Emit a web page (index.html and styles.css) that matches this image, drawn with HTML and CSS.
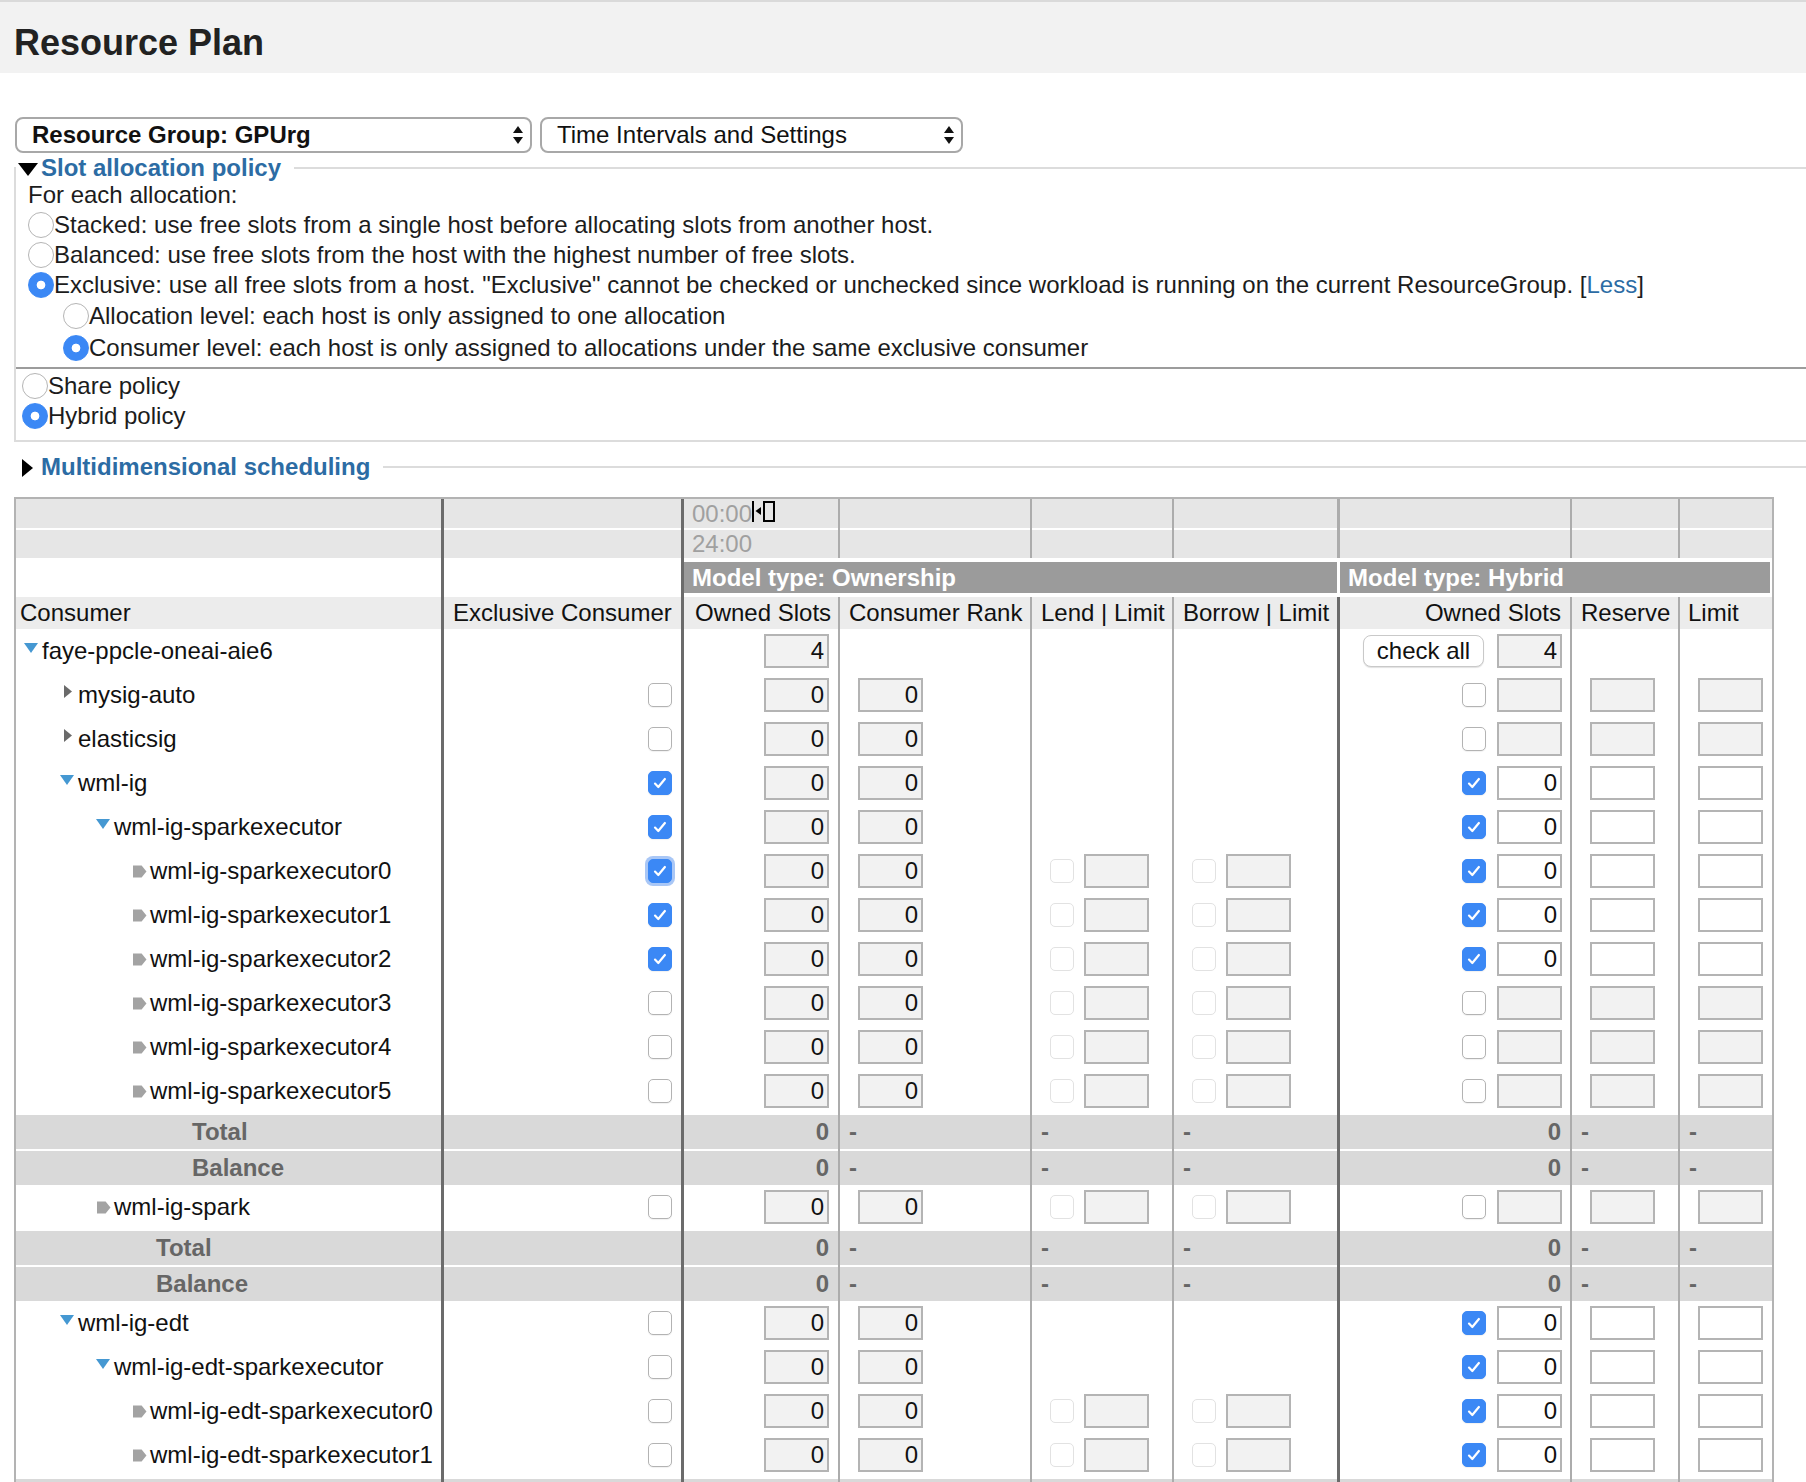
FILE: index.html
```html
<!DOCTYPE html>
<html lang="en">
<head>
<meta charset="utf-8">
<title>Resource Plan</title>
<link rel="stylesheet" href="styles.css">
</head>
<body>
<div class="app">
<header class="page-header"><h1 class="title">Resource Plan</h1></header>
<main class="main">
  <div class="toolbar">
    <div class="select sel-group"><span class="sel-label strong">Resource Group: GPUrg</span><svg class="sel-arrows" width="10" height="19" viewBox="0 0 10 19"><polygon points="5,0 10,7 0,7"/><polygon points="0,11 10,11 5,18"/></svg></div>
    <div class="select sel-time"><span class="sel-label">Time Intervals and Settings</span><svg class="sel-arrows" width="10" height="19" viewBox="0 0 10 19"><polygon points="5,0 10,7 0,7"/><polygon points="0,11 10,11 5,18"/></svg></div>
  </div>

  <fieldset class="fs fs-slot">
    <legend class="lg lg-slot"><svg class="tri-down" width="20" height="13" viewBox="0 0 20 13"><polygon points="0,0 20,0 10,13"/></svg><span>Slot allocation policy</span></legend>
    <div class="alloc">
      <div class="line">For each allocation:</div>
      <div class="opt"><span class="radio"></span><span>Stacked: use free slots from a single host before allocating slots from another host.</span></div>
      <div class="opt"><span class="radio"></span><span>Balanced: use free slots from the host with the highest number of free slots.</span></div>
      <div class="opt"><span class="radio on"></span><span>Exclusive: use all free slots from a host. "Exclusive" cannot be checked or unchecked since workload is running on the current ResourceGroup. [<a class="link">Less</a>]</span></div>
      <div class="opt sub"><span class="radio"></span><span>Allocation level: each host is only assigned to one allocation</span></div>
      <div class="opt sub"><span class="radio on"></span><span>Consumer level: each host is only assigned to allocations under the same exclusive consumer</span></div>
    </div>
    <div class="policies">
      <div class="opt"><span class="radio"></span><span>Share policy</span></div>
      <div class="opt"><span class="radio on"></span><span>Hybrid policy</span></div>
    </div>
  </fieldset>

  <fieldset class="fs fs-multi">
    <legend class="lg lg-multi"><svg class="tri-right" width="11" height="18" viewBox="0 0 11 18"><polygon points="0,0 11,9 0,18"/></svg><span>Multidimensional scheduling</span></legend>
  </fieldset>

  <table class="plan">
    <colgroup>
      <col class="k1"><col class="k2"><col class="k3"><col class="k4"><col class="k5"><col class="k6"><col class="k7"><col class="k8"><col class="k9">
    </colgroup>
    <tbody>
      <tr class="tr1">
        <td></td><td class="b2"></td>
        <td class="b2 time">00:00<svg class="caret" width="23" height="21" viewBox="0 0 23 21"><rect x="0" y="0" width="2" height="21"/><polygon points="9,6 9,14 3.5,10"/><rect class="caret-box" x="12" y="1" width="10" height="19"/></svg></td>
        <td class="b1"></td><td class="b1"></td><td class="b1"></td><td class="b3l"></td><td class="b1"></td><td class="b1"></td>
      </tr>
      <tr class="tr2">
        <td></td><td class="b2"></td>
        <td class="b2 time">24:00</td>
        <td class="b1"></td><td class="b1"></td><td class="b1"></td><td class="b3l"></td><td class="b1"></td><td class="b1"></td>
      </tr>
      <tr class="mr">
        <td></td><td class="b2"></td>
        <th colspan="4" class="b2 model">Model type: Ownership</th>
        <th colspan="3" class="model model-h">Model type: Hybrid</th>
      </tr>
      <tr class="hr">
        <th class="h-con">Consumer</th>
        <th class="b2">Exclusive Consumer</th>
        <th class="b2 h-own">Owned Slots</th>
        <th class="b1">Consumer Rank</th>
        <th class="b1">Lend | Limit</th>
        <th class="b1">Borrow | Limit</th>
        <th class="b2 h-r">Owned Slots</th>
        <th class="b1">Reserve</th>
        <th class="b1 h-lim">Limit</th>
      </tr>

      <tr class="dr">
        <td class="con"><div class="tree l0"><span class="ico"><svg class="t-down" width="14" height="10" viewBox="0 0 14 10"><polygon points="0,0 14,0 7,10"/></svg></span><span>faye-ppcle-oneai-aie6</span></div></td>
        <td class="b2 excl"></td>
        <td class="b2 own"><div class="fx end"><input class="in" type="text" value="4" readonly></div></td>
        <td class="b1 pl"></td>
        <td class="b1 pl"></td>
        <td class="b1 pl"></td>
        <td class="b2 hown"><div class="fx end"><button class="btn" type="button">check all</button><input class="in" type="text" value="4" readonly></div></td>
        <td class="b1 pl"></td>
        <td class="b1 pl"></td>
      </tr>

      <tr class="dr">
        <td class="con"><div class="tree l1"><span class="ico"><svg class="t-right" width="8" height="13" viewBox="0 0 8 13"><polygon points="0,0 8,6.5 0,13"/></svg></span><span>mysig-auto</span></div></td>
        <td class="b2 excl"><div class="fx end"><span class="cb"></span></div></td>
        <td class="b2 own"><div class="fx end"><input class="in" type="text" value="0" readonly></div></td>
        <td class="b1 pl"><div class="fx"><input class="in" type="text" value="0" readonly></div></td>
        <td class="b1 pl"></td>
        <td class="b1 pl"></td>
        <td class="b2 hown"><div class="fx end"><span class="cb"></span><input class="in" type="text" readonly></div></td>
        <td class="b1 pl"><div class="fx"><input class="in" type="text" readonly></div></td>
        <td class="b1 pl"><div class="fx"><input class="in" type="text" readonly></div></td>
      </tr>

      <tr class="dr">
        <td class="con"><div class="tree l1"><span class="ico"><svg class="t-right" width="8" height="13" viewBox="0 0 8 13"><polygon points="0,0 8,6.5 0,13"/></svg></span><span>elasticsig</span></div></td>
        <td class="b2 excl"><div class="fx end"><span class="cb"></span></div></td>
        <td class="b2 own"><div class="fx end"><input class="in" type="text" value="0" readonly></div></td>
        <td class="b1 pl"><div class="fx"><input class="in" type="text" value="0" readonly></div></td>
        <td class="b1 pl"></td>
        <td class="b1 pl"></td>
        <td class="b2 hown"><div class="fx end"><span class="cb"></span><input class="in" type="text" readonly></div></td>
        <td class="b1 pl"><div class="fx"><input class="in" type="text" readonly></div></td>
        <td class="b1 pl"><div class="fx"><input class="in" type="text" readonly></div></td>
      </tr>

      <tr class="dr">
        <td class="con"><div class="tree l1"><span class="ico"><svg class="t-down" width="14" height="10" viewBox="0 0 14 10"><polygon points="0,0 14,0 7,10"/></svg></span><span>wml-ig</span></div></td>
        <td class="b2 excl"><div class="fx end"><span class="cb on"><svg class="ck" width="14" height="12" viewBox="0 0 14 12"><path d="M2 6.6l3.3 3.4 6.6-8"/></svg></span></div></td>
        <td class="b2 own"><div class="fx end"><input class="in" type="text" value="0" readonly></div></td>
        <td class="b1 pl"><div class="fx"><input class="in" type="text" value="0" readonly></div></td>
        <td class="b1 pl"></td>
        <td class="b1 pl"></td>
        <td class="b2 hown"><div class="fx end"><span class="cb on"><svg class="ck" width="14" height="12" viewBox="0 0 14 12"><path d="M2 6.6l3.3 3.4 6.6-8"/></svg></span><input class="in w" type="text" value="0" readonly></div></td>
        <td class="b1 pl"><div class="fx"><input class="in w" type="text" readonly></div></td>
        <td class="b1 pl"><div class="fx"><input class="in w" type="text" readonly></div></td>
      </tr>

      <tr class="dr">
        <td class="con"><div class="tree l2"><span class="ico"><svg class="t-down" width="14" height="10" viewBox="0 0 14 10"><polygon points="0,0 14,0 7,10"/></svg></span><span>wml-ig-sparkexecutor</span></div></td>
        <td class="b2 excl"><div class="fx end"><span class="cb on"><svg class="ck" width="14" height="12" viewBox="0 0 14 12"><path d="M2 6.6l3.3 3.4 6.6-8"/></svg></span></div></td>
        <td class="b2 own"><div class="fx end"><input class="in" type="text" value="0" readonly></div></td>
        <td class="b1 pl"><div class="fx"><input class="in" type="text" value="0" readonly></div></td>
        <td class="b1 pl"></td>
        <td class="b1 pl"></td>
        <td class="b2 hown"><div class="fx end"><span class="cb on"><svg class="ck" width="14" height="12" viewBox="0 0 14 12"><path d="M2 6.6l3.3 3.4 6.6-8"/></svg></span><input class="in w" type="text" value="0" readonly></div></td>
        <td class="b1 pl"><div class="fx"><input class="in w" type="text" readonly></div></td>
        <td class="b1 pl"><div class="fx"><input class="in w" type="text" readonly></div></td>
      </tr>

      <tr class="dr">
        <td class="con"><div class="tree l3"><span class="ico"><svg class="t-leaf" width="15" height="15" viewBox="0 0 15 15"><path d="M1 1.5h8.6l4.9 6-4.9 6H1z"/></svg></span><span>wml-ig-sparkexecutor0</span></div></td>
        <td class="b2 excl"><div class="fx end"><span class="cb on focus"><svg class="ck" width="14" height="12" viewBox="0 0 14 12"><path d="M2 6.6l3.3 3.4 6.6-8"/></svg></span></div></td>
        <td class="b2 own"><div class="fx end"><input class="in" type="text" value="0" readonly></div></td>
        <td class="b1 pl"><div class="fx"><input class="in" type="text" value="0" readonly></div></td>
        <td class="b1 pl"><div class="fx"><span class="cb dis"></span><input class="in" type="text" readonly></div></td>
        <td class="b1 pl"><div class="fx"><span class="cb dis"></span><input class="in" type="text" readonly></div></td>
        <td class="b2 hown"><div class="fx end"><span class="cb on"><svg class="ck" width="14" height="12" viewBox="0 0 14 12"><path d="M2 6.6l3.3 3.4 6.6-8"/></svg></span><input class="in w" type="text" value="0" readonly></div></td>
        <td class="b1 pl"><div class="fx"><input class="in w" type="text" readonly></div></td>
        <td class="b1 pl"><div class="fx"><input class="in w" type="text" readonly></div></td>
      </tr>

      <tr class="dr">
        <td class="con"><div class="tree l3"><span class="ico"><svg class="t-leaf" width="15" height="15" viewBox="0 0 15 15"><path d="M1 1.5h8.6l4.9 6-4.9 6H1z"/></svg></span><span>wml-ig-sparkexecutor1</span></div></td>
        <td class="b2 excl"><div class="fx end"><span class="cb on"><svg class="ck" width="14" height="12" viewBox="0 0 14 12"><path d="M2 6.6l3.3 3.4 6.6-8"/></svg></span></div></td>
        <td class="b2 own"><div class="fx end"><input class="in" type="text" value="0" readonly></div></td>
        <td class="b1 pl"><div class="fx"><input class="in" type="text" value="0" readonly></div></td>
        <td class="b1 pl"><div class="fx"><span class="cb dis"></span><input class="in" type="text" readonly></div></td>
        <td class="b1 pl"><div class="fx"><span class="cb dis"></span><input class="in" type="text" readonly></div></td>
        <td class="b2 hown"><div class="fx end"><span class="cb on"><svg class="ck" width="14" height="12" viewBox="0 0 14 12"><path d="M2 6.6l3.3 3.4 6.6-8"/></svg></span><input class="in w" type="text" value="0" readonly></div></td>
        <td class="b1 pl"><div class="fx"><input class="in w" type="text" readonly></div></td>
        <td class="b1 pl"><div class="fx"><input class="in w" type="text" readonly></div></td>
      </tr>

      <tr class="dr">
        <td class="con"><div class="tree l3"><span class="ico"><svg class="t-leaf" width="15" height="15" viewBox="0 0 15 15"><path d="M1 1.5h8.6l4.9 6-4.9 6H1z"/></svg></span><span>wml-ig-sparkexecutor2</span></div></td>
        <td class="b2 excl"><div class="fx end"><span class="cb on"><svg class="ck" width="14" height="12" viewBox="0 0 14 12"><path d="M2 6.6l3.3 3.4 6.6-8"/></svg></span></div></td>
        <td class="b2 own"><div class="fx end"><input class="in" type="text" value="0" readonly></div></td>
        <td class="b1 pl"><div class="fx"><input class="in" type="text" value="0" readonly></div></td>
        <td class="b1 pl"><div class="fx"><span class="cb dis"></span><input class="in" type="text" readonly></div></td>
        <td class="b1 pl"><div class="fx"><span class="cb dis"></span><input class="in" type="text" readonly></div></td>
        <td class="b2 hown"><div class="fx end"><span class="cb on"><svg class="ck" width="14" height="12" viewBox="0 0 14 12"><path d="M2 6.6l3.3 3.4 6.6-8"/></svg></span><input class="in w" type="text" value="0" readonly></div></td>
        <td class="b1 pl"><div class="fx"><input class="in w" type="text" readonly></div></td>
        <td class="b1 pl"><div class="fx"><input class="in w" type="text" readonly></div></td>
      </tr>

      <tr class="dr">
        <td class="con"><div class="tree l3"><span class="ico"><svg class="t-leaf" width="15" height="15" viewBox="0 0 15 15"><path d="M1 1.5h8.6l4.9 6-4.9 6H1z"/></svg></span><span>wml-ig-sparkexecutor3</span></div></td>
        <td class="b2 excl"><div class="fx end"><span class="cb"></span></div></td>
        <td class="b2 own"><div class="fx end"><input class="in" type="text" value="0" readonly></div></td>
        <td class="b1 pl"><div class="fx"><input class="in" type="text" value="0" readonly></div></td>
        <td class="b1 pl"><div class="fx"><span class="cb dis"></span><input class="in" type="text" readonly></div></td>
        <td class="b1 pl"><div class="fx"><span class="cb dis"></span><input class="in" type="text" readonly></div></td>
        <td class="b2 hown"><div class="fx end"><span class="cb"></span><input class="in" type="text" readonly></div></td>
        <td class="b1 pl"><div class="fx"><input class="in" type="text" readonly></div></td>
        <td class="b1 pl"><div class="fx"><input class="in" type="text" readonly></div></td>
      </tr>

      <tr class="dr">
        <td class="con"><div class="tree l3"><span class="ico"><svg class="t-leaf" width="15" height="15" viewBox="0 0 15 15"><path d="M1 1.5h8.6l4.9 6-4.9 6H1z"/></svg></span><span>wml-ig-sparkexecutor4</span></div></td>
        <td class="b2 excl"><div class="fx end"><span class="cb"></span></div></td>
        <td class="b2 own"><div class="fx end"><input class="in" type="text" value="0" readonly></div></td>
        <td class="b1 pl"><div class="fx"><input class="in" type="text" value="0" readonly></div></td>
        <td class="b1 pl"><div class="fx"><span class="cb dis"></span><input class="in" type="text" readonly></div></td>
        <td class="b1 pl"><div class="fx"><span class="cb dis"></span><input class="in" type="text" readonly></div></td>
        <td class="b2 hown"><div class="fx end"><span class="cb"></span><input class="in" type="text" readonly></div></td>
        <td class="b1 pl"><div class="fx"><input class="in" type="text" readonly></div></td>
        <td class="b1 pl"><div class="fx"><input class="in" type="text" readonly></div></td>
      </tr>

      <tr class="dr">
        <td class="con"><div class="tree l3"><span class="ico"><svg class="t-leaf" width="15" height="15" viewBox="0 0 15 15"><path d="M1 1.5h8.6l4.9 6-4.9 6H1z"/></svg></span><span>wml-ig-sparkexecutor5</span></div></td>
        <td class="b2 excl"><div class="fx end"><span class="cb"></span></div></td>
        <td class="b2 own"><div class="fx end"><input class="in" type="text" value="0" readonly></div></td>
        <td class="b1 pl"><div class="fx"><input class="in" type="text" value="0" readonly></div></td>
        <td class="b1 pl"><div class="fx"><span class="cb dis"></span><input class="in" type="text" readonly></div></td>
        <td class="b1 pl"><div class="fx"><span class="cb dis"></span><input class="in" type="text" readonly></div></td>
        <td class="b2 hown"><div class="fx end"><span class="cb"></span><input class="in" type="text" readonly></div></td>
        <td class="b1 pl"><div class="fx"><input class="in" type="text" readonly></div></td>
        <td class="b1 pl"><div class="fx"><input class="in" type="text" readonly></div></td>
      </tr>

      <tr class="tot">
        <td class="tl tl3">Total</td><td class="b2"></td><td class="b2 tn">0</td><td class="b1 tdsh">-</td><td class="b1 tdsh">-</td><td class="b1 tdsh">-</td><td class="b2 tn">0</td><td class="b1 tdsh">-</td><td class="b1 tdsh">-</td>
      </tr>
      <tr class="tot">
        <td class="tl tl3">Balance</td><td class="b2"></td><td class="b2 tn">0</td><td class="b1 tdsh">-</td><td class="b1 tdsh">-</td><td class="b1 tdsh">-</td><td class="b2 tn">0</td><td class="b1 tdsh">-</td><td class="b1 tdsh">-</td>
      </tr>

      <tr class="dr">
        <td class="con"><div class="tree l2"><span class="ico"><svg class="t-leaf" width="15" height="15" viewBox="0 0 15 15"><path d="M1 1.5h8.6l4.9 6-4.9 6H1z"/></svg></span><span>wml-ig-spark</span></div></td>
        <td class="b2 excl"><div class="fx end"><span class="cb"></span></div></td>
        <td class="b2 own"><div class="fx end"><input class="in" type="text" value="0" readonly></div></td>
        <td class="b1 pl"><div class="fx"><input class="in" type="text" value="0" readonly></div></td>
        <td class="b1 pl"><div class="fx"><span class="cb dis"></span><input class="in" type="text" readonly></div></td>
        <td class="b1 pl"><div class="fx"><span class="cb dis"></span><input class="in" type="text" readonly></div></td>
        <td class="b2 hown"><div class="fx end"><span class="cb"></span><input class="in" type="text" readonly></div></td>
        <td class="b1 pl"><div class="fx"><input class="in" type="text" readonly></div></td>
        <td class="b1 pl"><div class="fx"><input class="in" type="text" readonly></div></td>
      </tr>

      <tr class="tot">
        <td class="tl tl2">Total</td><td class="b2"></td><td class="b2 tn">0</td><td class="b1 tdsh">-</td><td class="b1 tdsh">-</td><td class="b1 tdsh">-</td><td class="b2 tn">0</td><td class="b1 tdsh">-</td><td class="b1 tdsh">-</td>
      </tr>
      <tr class="tot">
        <td class="tl tl2">Balance</td><td class="b2"></td><td class="b2 tn">0</td><td class="b1 tdsh">-</td><td class="b1 tdsh">-</td><td class="b1 tdsh">-</td><td class="b2 tn">0</td><td class="b1 tdsh">-</td><td class="b1 tdsh">-</td>
      </tr>

      <tr class="dr">
        <td class="con"><div class="tree l1"><span class="ico"><svg class="t-down" width="14" height="10" viewBox="0 0 14 10"><polygon points="0,0 14,0 7,10"/></svg></span><span>wml-ig-edt</span></div></td>
        <td class="b2 excl"><div class="fx end"><span class="cb"></span></div></td>
        <td class="b2 own"><div class="fx end"><input class="in" type="text" value="0" readonly></div></td>
        <td class="b1 pl"><div class="fx"><input class="in" type="text" value="0" readonly></div></td>
        <td class="b1 pl"></td>
        <td class="b1 pl"></td>
        <td class="b2 hown"><div class="fx end"><span class="cb on"><svg class="ck" width="14" height="12" viewBox="0 0 14 12"><path d="M2 6.6l3.3 3.4 6.6-8"/></svg></span><input class="in w" type="text" value="0" readonly></div></td>
        <td class="b1 pl"><div class="fx"><input class="in w" type="text" readonly></div></td>
        <td class="b1 pl"><div class="fx"><input class="in w" type="text" readonly></div></td>
      </tr>

      <tr class="dr">
        <td class="con"><div class="tree l2"><span class="ico"><svg class="t-down" width="14" height="10" viewBox="0 0 14 10"><polygon points="0,0 14,0 7,10"/></svg></span><span>wml-ig-edt-sparkexecutor</span></div></td>
        <td class="b2 excl"><div class="fx end"><span class="cb"></span></div></td>
        <td class="b2 own"><div class="fx end"><input class="in" type="text" value="0" readonly></div></td>
        <td class="b1 pl"><div class="fx"><input class="in" type="text" value="0" readonly></div></td>
        <td class="b1 pl"></td>
        <td class="b1 pl"></td>
        <td class="b2 hown"><div class="fx end"><span class="cb on"><svg class="ck" width="14" height="12" viewBox="0 0 14 12"><path d="M2 6.6l3.3 3.4 6.6-8"/></svg></span><input class="in w" type="text" value="0" readonly></div></td>
        <td class="b1 pl"><div class="fx"><input class="in w" type="text" readonly></div></td>
        <td class="b1 pl"><div class="fx"><input class="in w" type="text" readonly></div></td>
      </tr>

      <tr class="dr">
        <td class="con"><div class="tree l3"><span class="ico"><svg class="t-leaf" width="15" height="15" viewBox="0 0 15 15"><path d="M1 1.5h8.6l4.9 6-4.9 6H1z"/></svg></span><span>wml-ig-edt-sparkexecutor0</span></div></td>
        <td class="b2 excl"><div class="fx end"><span class="cb"></span></div></td>
        <td class="b2 own"><div class="fx end"><input class="in" type="text" value="0" readonly></div></td>
        <td class="b1 pl"><div class="fx"><input class="in" type="text" value="0" readonly></div></td>
        <td class="b1 pl"><div class="fx"><span class="cb dis"></span><input class="in" type="text" readonly></div></td>
        <td class="b1 pl"><div class="fx"><span class="cb dis"></span><input class="in" type="text" readonly></div></td>
        <td class="b2 hown"><div class="fx end"><span class="cb on"><svg class="ck" width="14" height="12" viewBox="0 0 14 12"><path d="M2 6.6l3.3 3.4 6.6-8"/></svg></span><input class="in w" type="text" value="0" readonly></div></td>
        <td class="b1 pl"><div class="fx"><input class="in w" type="text" readonly></div></td>
        <td class="b1 pl"><div class="fx"><input class="in w" type="text" readonly></div></td>
      </tr>

      <tr class="dr">
        <td class="con"><div class="tree l3"><span class="ico"><svg class="t-leaf" width="15" height="15" viewBox="0 0 15 15"><path d="M1 1.5h8.6l4.9 6-4.9 6H1z"/></svg></span><span>wml-ig-edt-sparkexecutor1</span></div></td>
        <td class="b2 excl"><div class="fx end"><span class="cb"></span></div></td>
        <td class="b2 own"><div class="fx end"><input class="in" type="text" value="0" readonly></div></td>
        <td class="b1 pl"><div class="fx"><input class="in" type="text" value="0" readonly></div></td>
        <td class="b1 pl"><div class="fx"><span class="cb dis"></span><input class="in" type="text" readonly></div></td>
        <td class="b1 pl"><div class="fx"><span class="cb dis"></span><input class="in" type="text" readonly></div></td>
        <td class="b2 hown"><div class="fx end"><span class="cb on"><svg class="ck" width="14" height="12" viewBox="0 0 14 12"><path d="M2 6.6l3.3 3.4 6.6-8"/></svg></span><input class="in w" type="text" value="0" readonly></div></td>
        <td class="b1 pl"><div class="fx"><input class="in w" type="text" readonly></div></td>
        <td class="b1 pl"><div class="fx"><input class="in w" type="text" readonly></div></td>
      </tr>

      <tr class="tot">
        <td></td><td class="b2"></td><td class="b2"></td><td class="b1"></td><td class="b1"></td><td class="b1"></td><td class="b2"></td><td class="b1"></td><td class="b1"></td>
      </tr>
    </tbody>
  </table>
</main>
</div>
</body>
</html>
```

FILE: styles.css
```css
html, body {
  margin: 0;
  padding: 0;
}

body {
  font-family: "Liberation Sans", Arial, Helvetica, sans-serif;
  font-size: 24px;
  color: #1c1c1c;
  background: #fff;
}

.app {
  height: 1482px;
  overflow: hidden;
}

/* ---------- header ---------- */
.page-header {
  box-sizing: border-box;
  height: 73px;
  background: #f2f2f2;
  border-top: 2px solid #dadada;
  padding: 20px 14px 0;
}

.title {
  margin: 0;
  font-size: 36px;
  line-height: 41px;
  font-weight: bold;
  color: #222;
}

.main {
  padding-left: 14px;
}

/* ---------- selects ---------- */
.toolbar {
  display: flex;
  gap: 8px;
  margin-top: 44px;
  padding-left: 1px;
}

.select {
  box-sizing: border-box;
  height: 36px;
  border: 2px solid #a8a8a8;
  border-radius: 8px;
  background: #fff;
  display: flex;
  align-items: center;
  justify-content: space-between;
  padding: 0 7px 0 15px;
}

.sel-group { width: 517px; }
.sel-time { width: 423px; }

.sel-label {
  line-height: 28px;
  white-space: nowrap;
  color: #111;
}

.strong { font-weight: bold; }

.sel-arrows {
  fill: #111;
  flex: none;
}

/* ---------- fieldsets ---------- */
.fs {
  margin: 0;
  padding: 0;
  min-width: 0;
}

.fs-slot {
  margin-top: 3px;
  border: 2px solid #dcdcdc;
  border-right: 0;
}

.lg {
  font-weight: bold;
  color: #2c6ca4;
  white-space: nowrap;
}

.lg-slot {
  padding: 0 13px 0 2px;
  line-height: 24px;
}

.tri-down {
  fill: #000;
  margin-right: 3px;
  vertical-align: baseline;
}

.fs-multi {
  margin-top: 12px;
  border: 0;
  border-top: 2px solid #dcdcdc;
}

.lg-multi {
  padding: 0 13px 0 8px;
  line-height: 26px;
}

.tri-right {
  fill: #000;
  margin-right: 8px;
  vertical-align: -2px;
}

.alloc {
  padding: 0 0 3px 12px;
  border-bottom: 2px solid #9c9c9c;
}

.line {
  line-height: 30px;
}

.opt {
  display: flex;
  align-items: center;
  height: 30px;
  white-space: nowrap;
}

.opt.sub {
  height: 32px;
  padding-left: 35px;
}

.policies {
  padding: 2px 0 9px 6px;
}

.radio {
  flex: none;
  box-sizing: border-box;
  width: 26px;
  height: 26px;
  border-radius: 50%;
  border: 1.5px solid #b5b5b5;
  background: #fff;
}

.radio.on {
  border-color: #3b88f5;
  background: radial-gradient(circle, #fff 0 4px, #3b88f5 4.7px);
}

.link {
  color: #2c6ca4;
}

/* ---------- table ---------- */
.plan {
  box-sizing: border-box;
  width: 1760px;
  table-layout: fixed;
  border-collapse: separate;
  border-spacing: 0;
  border: 2px solid #b3b3b3;
  margin-top: 17px;
  line-height: 28px;
  font-size: 24px;
}

.k1 { width: 425px; }
.k2 { width: 240px; }
.k3 { width: 157px; }
.k4 { width: 192px; }
.k5 { width: 142px; }
.k6 { width: 165px; }
.k7 { width: 233px; }
.k8 { width: 108px; }
.k9 { width: 94px; }

.plan td,
.plan th {
  padding: 0;
  white-space: nowrap;
  font-weight: normal;
  text-align: left;
  vertical-align: middle;
  overflow: hidden;
}

.plan .b2 { border-left: 3px solid #6b6b6b; }
.plan .b1 { border-left: 2px solid #acacac; }
.plan .b3l { border-left: 3px solid #acacac; }

/* time rows */
.tr1 { height: 29px; }
.tr2 { height: 30px; }

.tr1 td,
.tr2 td {
  background: #e6e6e6;
}

.tr2 td {
  box-shadow: inset 0 2px 0 #fff;
  padding-top: 2px;
}

.plan .time {
  color: #a0a0a0;
  padding-left: 8px;
}

.caret {
  fill: #000;
  vertical-align: baseline;
}

.caret .caret-box {
  fill: none;
  stroke: #000;
  stroke-width: 2;
}

/* model type row */
.mr { height: 39px; }

.plan .model {
  background: #9b9b9b;
  color: #fff;
  font-weight: bold;
  line-height: 31px;
  padding-left: 8px;
  box-shadow: inset 0 4px 0 #fff, inset 0 -4px 0 #fff;
}

.plan .model-h {
  border-left: 3px solid #fff;
  box-shadow: inset 0 4px 0 #fff, inset 0 -4px 0 #fff, inset -2px 0 0 #fff;
}

/* header row */
.hr { height: 32px; }

.plan .hr th {
  background: #ececec;
  padding-left: 9px;
  color: #111;
}

.plan .hr .h-con { padding-left: 4px; }
.plan .hr .h-own { padding-left: 11px; }
.plan .hr .h-r {
  text-align: right;
  padding-left: 0;
  padding-right: 9px;
}
.plan .hr .h-lim { padding-left: 8px; }

/* data rows */
.dr { height: 44px; }

.plan .con { padding-left: 8px; }

.tree {
  display: flex;
  align-items: center;
  color: #111;
}

.l1 { padding-left: 36px; }
.l2 { padding-left: 72px; }
.l3 { padding-left: 108px; }

.ico {
  flex: none;
  width: 18px;
  display: flex;
  align-items: center;
}

.t-down {
  fill: #4598d2;
  margin-bottom: 6px;
}

.t-right {
  fill: #6a6a6a;
  margin-left: 4px;
  margin-bottom: 7px;
}

.t-leaf {
  fill: #a3a3a3;
}

.fx {
  display: flex;
  align-items: center;
}

.fx.end {
  justify-content: flex-end;
}

.plan .excl { padding-right: 9px; }
.plan .own { padding-right: 9px; }
.plan .pl { padding-left: 18px; }
.plan .hown { padding-right: 8px; }

.cb {
  flex: none;
  box-sizing: border-box;
  width: 24px;
  height: 24px;
  border: 1.5px solid #b3b3b3;
  border-radius: 5px;
  background: #fff;
  display: flex;
  align-items: center;
  justify-content: center;
  box-shadow: 0 1px 1px rgba(0, 0, 0, 0.06);
}

.cb.on {
  background: #3b88f5;
  border-color: #3b88f5;
}

.cb.dis {
  border-color: #e2e2e2;
  box-shadow: none;
}

.cb.focus {
  box-shadow: 0 0 0 3px #a9c7f6;
}

.ck {
  fill: none;
  stroke: #fff;
  stroke-width: 2.2;
  stroke-linecap: round;
  stroke-linejoin: round;
}

.pl .cb { margin-right: 10px; }
.hown .cb { margin-right: 11px; }

.in {
  box-sizing: border-box;
  flex: none;
  width: 65px;
  height: 34px;
  margin: 0;
  border: 2px solid #b4b4b4;
  border-radius: 0;
  background: #f2f2f2;
  font-family: "Liberation Sans", Arial, Helvetica, sans-serif;
  font-size: 24px;
  color: #111;
  text-align: right;
  padding: 0 3px;
  outline: none;
}

.in.w {
  background: #fff;
}

.btn {
  box-sizing: border-box;
  width: 121px;
  height: 32px;
  margin: 0 13px 0 0;
  padding: 0;
  border: 1px solid #c9c9c9;
  border-radius: 8px;
  background: #fff;
  box-shadow: 0 1px 1px rgba(0, 0, 0, 0.12);
  font-family: "Liberation Sans", Arial, Helvetica, sans-serif;
  font-size: 24px;
  line-height: 28px;
  color: #111;
}

/* total / balance rows */
.tot { height: 36px; }

.tot td {
  background: #d9d9d9;
  box-shadow: inset 0 2px 0 #fff;
  font-weight: bold;
  color: #666;
}

.plan .tot td {
  padding-top: 2px;
  font-weight: bold;
}

.plan .tot .tn {
  text-align: right;
  padding-right: 9px;
}

.plan .tot .tdsh { padding-left: 9px; }
.plan .tot .tl3 { padding-left: 176px; }
.plan .tot .tl2 { padding-left: 140px; }
```
